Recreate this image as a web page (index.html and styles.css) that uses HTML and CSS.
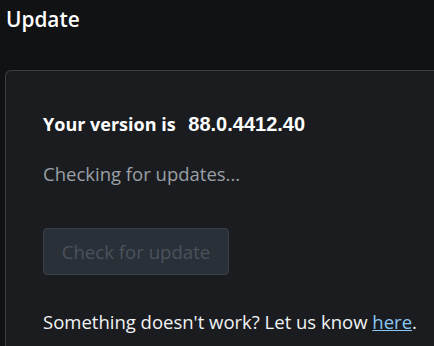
FILE: index.html
```html
<!DOCTYPE html>
<html>
<head>
<meta charset="utf-8">
<link rel="stylesheet" href="styles.css">
</head>
<body>
<h1 class="title">Update</h1>
<section class="card">
  <p class="version">Your version is <span class="num">88.0.4412.40</span></p>
  <p class="status">Checking for updates...</p>
  <button class="btn" disabled>Check for update</button>
  <p class="footer">Something doesn't work? Let us know <a href="#">here</a>.</p>
</section>
</body>
</html>
```
FILE: styles.css
```css
html, body {
  margin: 0;
  padding: 0;
  background: #111214;
  height: 100%;
  overflow: hidden;
}
body {
  font-family: "Open Sans", "Noto Sans", sans-serif;
  color: #f1f3f4;
  padding: 0 0 0 5px;
}
.title {
  margin: 0;
  padding: 5px 0 0 1px;
  font-size: 20.8px;
  font-weight: 600;
  line-height: 28px;
  color: #ffffff;
}
.card {
  margin-top: 37px;
  background: #1a1c20;
  border: 1px solid #3c4046;
  border-right: none;
  border-bottom: none;
  border-top-left-radius: 6px;
  padding: 40px 0 0 37px;
  height: 276px;
  box-sizing: border-box;
}
.version {
  margin: 0;
  font-size: 18px;
  font-weight: 700;
  line-height: 26px;
  color: #ffffff;
}
.num {
  margin-left: 8px;
  font-family: "Liberation Sans", Arial, sans-serif;
  font-size: 20px;
}
.status {
  margin: 24px 0 0;
  font-size: 18.5px;
  line-height: 26px;
  color: #9aa0a6;
}
.btn {
  margin-top: 41px;
  width: 186px;
  height: 47px;
  background: #2a3038;
  border: 1px solid #3a4048;
  border-radius: 4px;
  font-family: inherit;
  font-size: 18.6px;
  color: #4a525c;
  padding: 0;
}
.footer {
  margin: 34px 0 0;
  font-size: 18.5px;
  line-height: 26px;
  color: #f1f3f4;
}
.footer a {
  color: #8cc8f4;
}
```
